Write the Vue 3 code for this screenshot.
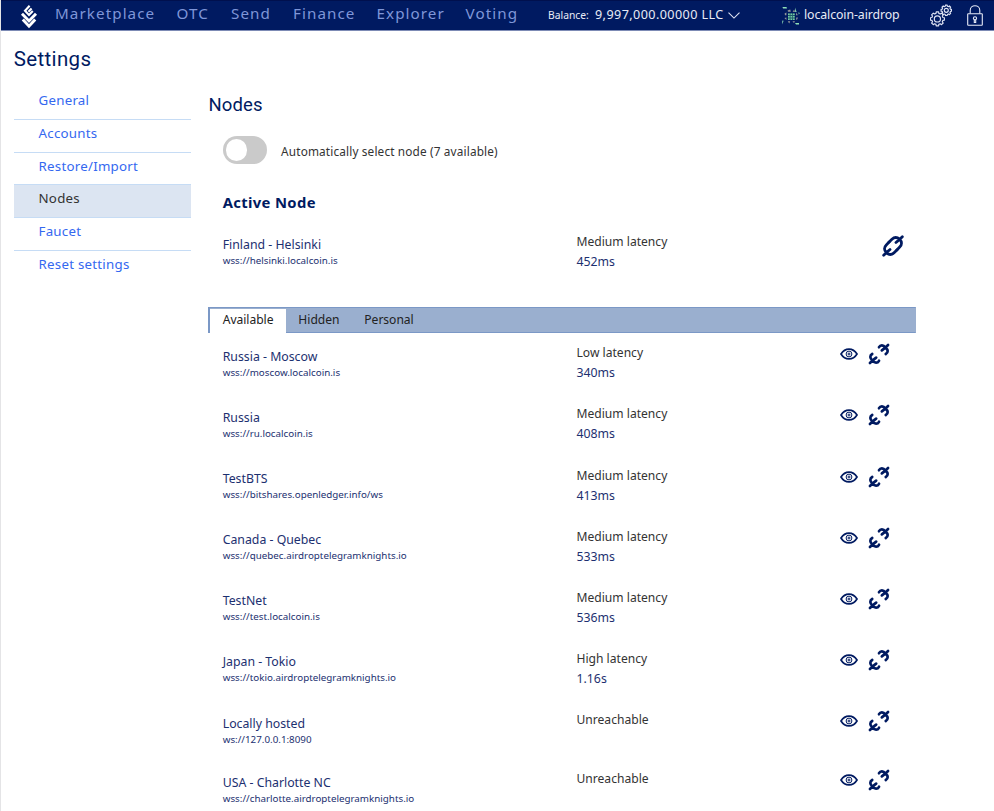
<script setup>
const menu = [
  ['Marketplace', 'marketplace'],
  ['OTC', 'otc'],
  ['Send', 'send'],
  ['Finance', 'finance'],
  ['Explorer', 'explorer'],
  ['Voting', 'voting'],
]
const sections = ['General', 'Accounts', 'Restore/Import', 'Nodes', 'Faucet', 'Reset settings']
const tabs = ['Available', 'Hidden', 'Personal']
const nodes = [
  { name: 'Russia - Moscow', url: 'wss://moscow.localcoin.is', status: 'Low latency', ping: '340ms' },
  { name: 'Russia', url: 'wss://ru.localcoin.is', status: 'Medium latency', ping: '408ms' },
  { name: 'TestBTS', url: 'wss://bitshares.openledger.info/ws', status: 'Medium latency', ping: '413ms' },
  { name: 'Canada - Quebec', url: 'wss://quebec.airdroptelegramknights.io', status: 'Medium latency', ping: '533ms' },
  { name: 'TestNet', url: 'wss://test.localcoin.is', status: 'Medium latency', ping: '536ms' },
  { name: 'Japan - Tokio', url: 'wss://tokio.airdroptelegramknights.io', status: 'High latency', ping: '1.16s' },
  { name: 'Locally hosted', url: 'ws://127.0.0.1:8090', status: 'Unreachable', ping: '' },
  { name: 'USA - Charlotte NC', url: 'wss://charlotte.airdroptelegramknights.io', status: 'Unreachable', ping: '' },
]

// Outline of a cog with eight rounded teeth, centred on the origin.
function cog(r) {
  const n = 8
  let d = ''
  for (let i = 0; i < n; i++) {
    const a = (i * 2 * Math.PI) / n
    const pts = [[-0.25, 0.8], [-0.17, 1], [0.17, 1], [0.25, 0.8]]
    for (const [o, k] of pts) {
      d += `${d ? 'L' : 'M'}${(Math.cos(a + o) * r * k).toFixed(2)} ${(Math.sin(a + o) * r * k).toFixed(2)}`
    }
  }
  return d + 'Z'
}
const closedHalf = 'M13.2 0H9.6M0 -5.5H4C7.4 -5.5 9.4 -3.4 9.4 0C9.4 3.4 7.4 5.5 4 5.5H0M9 0L4.6 -.4'
const openHalf = 'M12.8 0H9.4M4.8 -4.8C7.6 -5.6 9.6 -3.6 9.2 0C9.6 3.6 7.6 5.6 4.8 4.8M9 0L4.6 -.6'
</script>

<template>
  <div class="page">
    <header class="topbar">
      <svg class="logo" viewBox="0 0 18 26">
        <path d="M9.6 1.8L5 6.7L9 10.9L12.8 7.1M11.6 4.4L8.4 7.7" fill="none" stroke="#fff" stroke-width="2.1" />
        <path d="M2 9.8L9 17L16 9.8M2.8 15.6L9 22.2L15.2 15.6" fill="none" stroke="#fff" stroke-width="2.9" />
      </svg>
      <nav class="menu">
        <a v-for="[label, key] in menu" :key="key" :class="key">{{ label }}</a>
      </nav>
      <span class="balance-label">Balance:</span>
      <span class="balance">9,997,000.00000 LLC</span>
      <svg class="chevron" viewBox="0 0 12 7"><path d="M.5 .7L6 6.1L11.5 .7" fill="none" stroke="#dfe4f4" stroke-width="1.1" /></svg>
      <svg class="identicon" viewBox="0 0 18 18">
        <path d="M.5 0h4l.5 1.5H1zM13 .5l1.6 4.4h-1.4zM0 17.5l.4-4 1.2.2zM13 16h4v1.6h-3zM16.4 5.2l1.4.8-1 1.5z" fill="#8fe0b8" />
        <path d="M5.6 3.4l2.6-1 .6 2.4H6zM10.6 4.8l1.6-2.4 .8 2.6zM2.6 6.6l1.8-1v2.6H3zM14.4 5.4l1.4 2.8h-1.8zM2.4 11l2-.6v2.6zM14.2 10.4H16l-1 2.4h-.8zM5.8 14.2h2.4l-1 2.2zM10.4 14.2h2.6l-1 1.8z" fill="#94969a" />
        <path d="M6 6.4h6.6v6.4H6z" fill="#1f5a6c" />
        <path d="M6 6.4h1.7v1.6H6zM8.5 6.4h1.7v1.6H8.5zM11 6.4h1.7v1.6H11zM6 8.9h1.7v1.6H6zM8.5 8.9h1.7v1.6H8.5zM11 8.9h1.7v1.6H11zM6 11.4h1.7v1.6H6zM8.5 11.4h1.7v1.6H8.5zM11 11.4h1.7v1.6H11z" fill="#74c9a5" />
      </svg>
      <span class="account">localcoin-airdrop</span>
      <svg class="cogs" viewBox="0 0 22 23" fill="none" stroke="#dfe4f4" stroke-width="1.15" stroke-linejoin="round">
        <g transform="translate(7.4 14.9)"><path :d="cog(7.1)" /><circle r="3.1" /></g>
        <g transform="translate(16.3 6.3)"><path :d="cog(5.3)" /><circle r="2" /></g>
      </svg>
      <svg class="lock" viewBox="0 0 16 22" fill="none" stroke="#e6eaf6" stroke-width="1.1">
        <rect x=".7" y="8.7" width="14.6" height="11.6" rx=".6" />
        <path d="M3.2 8.5V5.5C3.2 -.8 12.8 -.8 12.8 5.5V8.5" />
        <circle cx="8" cy="13.3" r="1.6" /><path d="M7.3 14.8V17.5H8.7V14.8" />
      </svg>
    </header>

    <h1>Settings</h1>
    <div class="columns">
      <ul class="sidebar">
        <li v-for="s in sections" :key="s" :class="{ current: s === 'Nodes' }">{{ s }}</li>
      </ul>

      <main>
        <h2>Nodes</h2>
        <div class="auto">
          <span class="switch"><i></i></span>
          <span class="auto-label">Automatically select node (7 available)</span>
        </div>
        <h3>Active Node</h3>
        <div class="node active">
          <div class="ident"><div class="name">Finland - Helsinki</div><div class="url">wss://helsinki.localcoin.is</div></div>
          <div class="latency"><div class="status">Medium latency</div><div class="ping">452ms</div></div>
          <svg class="joined" viewBox="-12 -12 24 24" fill="none" stroke="#001a61" stroke-width="2.8" stroke-linecap="round" stroke-linejoin="round">
            <g transform="rotate(-45)"><path :d="closedHalf" /><path :d="closedHalf" transform="rotate(180)" /></g>
          </svg>
        </div>
        <div class="tabs">
          <span v-for="(t, i) in tabs" :key="t" :class="{ selected: i === 0 }">{{ t }}</span>
        </div>
        <div class="list">
          <div v-for="n in nodes" :key="n.name" class="node">
            <div class="ident"><div class="name">{{ n.name }}</div><div class="url">{{ n.url }}</div></div>
            <div class="latency"><div class="status">{{ n.status }}</div><div class="ping">{{ n.ping }}</div></div>
            <svg class="eye" viewBox="0 0 18 12" fill="none" stroke="#001a61">
              <path d="M1 6C5 -.6 13 -.6 17 6C13 12.6 5 12.6 1 6Z" stroke-width="1.7" />
              <circle cx="9" cy="6" r="2.9" stroke-width="1" /><circle cx="9" cy="6" r="1" stroke-width="1" />
            </svg>
            <svg class="broken" viewBox="-11 -11 22 22" fill="none" stroke="#001a61" stroke-width="2.7" stroke-linecap="round" stroke-linejoin="round">
              <g transform="rotate(-45)"><path :d="openHalf" /><path :d="openHalf" transform="rotate(180)" /></g>
            </svg>
          </div>
        </div>
      </main>
    </div>
  </div>
</template>

<style>
body { margin: 0; overflow: hidden; background: #fff; }
</style>

<style scoped>
.page { box-sizing: border-box; width: 994px; height: 811px; overflow: hidden; font-family: "Noto Sans", sans-serif; color: #333; border-left: 1px solid #e4e4e6; }
.topbar { display: flex; align-items: center; box-sizing: border-box; height: 31px; margin-left: -1px; background: #001a61; border-top: 1px solid #00104e; border-bottom: 1px solid #7d8bb5; color: #e8ebf6; white-space: nowrap; padding-left: 20px; }
.topbar > * { flex: none; }
.logo { width: 18px; height: 26px; margin-top: 2px; }
.menu { display: flex; margin-left: 17px; width: 493px; color: #7f96d8; font-size: 15.2px; letter-spacing: 1.08px; line-height: 28px; margin-top: -5px; }
.menu a { flex: none; }
.marketplace { width: 121.5px; }
.otc { width: 54.5px; }
.send { width: 62px; }
.finance { width: 83.5px; }
.explorer { width: 89px; }
.balance-label { width: 47px; font-size: 10.3px; margin-top: -1px; }
.balance { width: 133px; font-size: 12.6px; margin-top: -2px; letter-spacing: .42px; }
.chevron { width: 12px; height: 7px; }
.identicon { width: 18px; height: 18px; margin-left: 42px; margin-top: 1px; }
.account { width: 122px; margin-left: 4px; font-size: 12.3px; margin-top: -2px; letter-spacing: -.08px; }
.cogs { width: 22px; height: 23px; margin-left: 4px; }
.lock { width: 16px; height: 22px; margin-left: 15px; }
h1, h2 { margin: 0; color: #001a61; font-family: Roboto, sans-serif; font-weight: 400; }
h1 { font-size: 20.5px; line-height: 24px; padding: 16px 0 0 12.7px; letter-spacing: .35px; }
.columns { display: flex; padding-left: 12.5px; }
.sidebar { list-style: none; margin: 16px 0 0; padding: 0; width: 177.5px; flex: none; }
.sidebar li { box-sizing: border-box; height: 32.75px; padding-left: 25px; line-height: 26px; font-size: 13.3px; color: #3468f0; border-bottom: 1px solid #c6dcf5; letter-spacing: .25px; }
.sidebar li:last-child { border: 0; }
.sidebar .current { color: #333; background: #dce5f2; }
main { width: 707.5px; margin-left: 17px; }
h2 { font-size: 18.5px; line-height: 24px; margin-top: 22px; padding-left: .5px; letter-spacing: .1px; }
.auto { display: flex; height: 28px; margin: 19px 0 0 14.6px; align-items: center; gap: 14px; font-size: 11.8px; }
.auto-label { padding-top: 2px; letter-spacing: .15px; }
.switch { width: 44.5px; height: 28px; border-radius: 14px; background: #cacaca; }
.switch i { display: block; width: 21.5px; height: 21.5px; margin: 3.25px; border-radius: 50%; background: #fff; }
h3 { margin: 26px 0 0 14.7px; color: #001a61; font-size: 14.8px; line-height: 24px; font-weight: 700; letter-spacing: .35px; }
.node { display: flex; height: 61.1px; padding-left: 14.7px; color: #1c3070; white-space: nowrap; }
.node:nth-child(7) { height: 59.5px; }
.node > * { flex: none; }
.ident { width: 353.8px; padding-top: 5.6px; }
.name { font-size: 12.3px; line-height: 16px; }
.url { font-size: 9.8px; line-height: 16px; }
.latency { width: 263.6px; }
.status { color: #333; font-size: 12.1px; line-height: 20px; }
.ping { font-size: 12.3px; line-height: 19px; }
.active { height: 75px; margin-top: 18px; }
.active .latency { width: 304.5px; }
.active .ident { padding-top: 5px; }
.active .status, .active .ping { line-height: 19.5px; }
.joined { width: 24px; height: 24px; margin-top: 2px; }
.tabs { display: flex; box-sizing: border-box; height: 26px; background: #9aafcf; border: 1px solid #7b98c6; border-right-color: #9aafcf; border-left-width: 2px; color: #222; font-size: 12.1px; line-height: 23px; }
.tabs span { padding: 0 12.2px 0 12.7px; letter-spacing: -.03px; }
.tabs .selected { background: #fff; height: 24px; margin-top: 1px; line-height: 21px; }
.list { padding-top: 10.4px; }
.eye { width: 18px; height: 12px; margin-top: 5px; }
.broken { width: 22px; height: 22px; margin: 0 0 0 9.7px; }
</style>
